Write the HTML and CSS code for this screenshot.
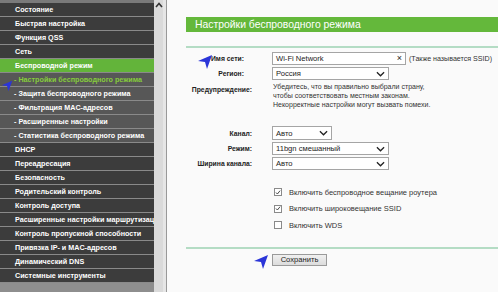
FILE: index.html
```html
<!DOCTYPE html>
<html lang="ru">
<head>
<meta charset="utf-8">
<title>Настройки беспроводного режима</title>
<link rel="stylesheet" href="styles.css">
</head>
<body>
<div class="page">
  <nav class="sidebar">
    <div class="top-band"></div>
    <div class="item">Состояние</div>
    <div class="item">Быстрая настройка</div>
    <div class="item">Функция QSS</div>
    <div class="item">Сеть</div>
    <div class="item item-open">Беспроводной режим</div>
    <div class="item sub sub-active">- Настройки беспроводного режима</div>
    <div class="item sub">- Защита беспроводного режима</div>
    <div class="item sub">- Фильтрация MAC-адресов</div>
    <div class="item sub">- Расширенные настройки</div>
    <div class="item sub">- Статистика беспроводного режима</div>
    <div class="item">DHCP</div>
    <div class="item">Переадресация</div>
    <div class="item">Безопасность</div>
    <div class="item">Родительский контроль</div>
    <div class="item">Контроль доступа</div>
    <div class="item">Расширенные настройки маршрутизации</div>
    <div class="item">Контроль пропускной способности</div>
    <div class="item">Привязка IP- и MAC-адресов</div>
    <div class="item">Динамический DNS</div>
    <div class="item">Системные инструменты</div>
    <div class="bottom-band"></div>
    <svg class="pointer pointer-side" viewBox="0 0 16 16" width="12" height="12"><polygon points="15,1 1,7 8,8 10,15" fill="#2b35d8"/></svg>
  </nav>
  <div class="scrollbar">
    <svg class="scroll-up" viewBox="0 0 10 8" width="10" height="8"><polyline points="2,6 5,2.5 8,6" fill="none" stroke="#333" stroke-width="1.6"/></svg>
  </div>
  <main class="content">
    <div class="title">Настройки беспроводного режима</div>
    <div class="rule"></div>
    <div class="form">
      <div class="row row-ssid">
        <div class="label label-narrow">Имя сети:</div>
        <div class="field input input-ssid"><span>Wi-Fi Network</span><span class="clear">×</span></div>
        <div class="hint">(Также называется SSID)</div>
        <svg class="pointer pointer-ssid" viewBox="0 0 16 16" width="16" height="16"><polygon points="15,1 1,7 8,8 10,15" fill="#2b35d8"/></svg>
      </div>
      <div class="row row-region">
        <div class="label label-narrow">Регион:</div>
        <div class="field select select-wide"><span>Россия</span><svg class="chev" viewBox="0 0 10 6" width="9" height="6"><polyline points="1,1 5,5 9,1" fill="none" stroke="#222" stroke-width="1.4"/></svg></div>
      </div>
      <div class="row row-warn">
        <div class="label">Предупреждение:</div>
        <div class="warn-text">Убедитесь, что вы правильно выбрали страну,<br>чтобы соответствовать местным законам.<br>Некорректные настройки могут вызвать помехи.</div>
      </div>
      <div class="row row-channel">
        <div class="label">Канал:</div>
        <div class="field select select-short"><span>Авто</span><svg class="chev" viewBox="0 0 10 6" width="9" height="6"><polyline points="1,1 5,5 9,1" fill="none" stroke="#222" stroke-width="1.4"/></svg></div>
      </div>
      <div class="row row-mode">
        <div class="label">Режим:</div>
        <div class="field select select-wide"><span>11bgn смешанный</span><svg class="chev" viewBox="0 0 10 6" width="9" height="6"><polyline points="1,1 5,5 9,1" fill="none" stroke="#222" stroke-width="1.4"/></svg></div>
      </div>
      <div class="row row-width">
        <div class="label">Ширина канала:</div>
        <div class="field select select-wide"><span>Авто</span><svg class="chev" viewBox="0 0 10 6" width="9" height="6"><polyline points="1,1 5,5 9,1" fill="none" stroke="#222" stroke-width="1.4"/></svg></div>
      </div>
      <div class="checks">
        <div class="check-row"><span class="box"><svg viewBox="0 0 8 8" width="7" height="7"><polyline points="1.3,4 3.2,6 6.8,1.5" fill="none" stroke="#333" stroke-width="1.2"/></svg></span><span>Включить беспроводное вещание роутера</span></div>
        <div class="check-row"><span class="box"><svg viewBox="0 0 8 8" width="7" height="7"><polyline points="1.3,4 3.2,6 6.8,1.5" fill="none" stroke="#333" stroke-width="1.2"/></svg></span><span>Включить широковещание SSID</span></div>
        <div class="check-row"><span class="box"></span><span>Включить WDS</span></div>
      </div>
    </div>
    <div class="rule rule-bottom"></div>
    <div class="actions">
      <svg class="pointer pointer-save" viewBox="0 0 16 16" width="16" height="16"><polygon points="15,1 1,7 8,8 10,15" fill="#2b35d8"/></svg>
      <button class="save">Сохранить</button>
    </div>
  </main>
</div>
</body>
</html>
```
FILE: styles.css
```css
html, body {
  margin: 0;
  padding: 0;
  width: 498px;
  height: 292px;
  overflow: hidden;
  font-family: "Liberation Sans", Arial, sans-serif;
}

.page {
  display: flex;
  height: 292px;
}

.sidebar {
  position: relative;
  width: 154px;
  flex: none;
  display: flex;
  flex-direction: column;
  background: #8d8d8d;
  overflow: hidden;
}

.top-band {
  height: 3px;
  background: #7a7a7a;
  flex: none;
}

.item {
  flex: none;
  height: 13px;
  line-height: 13px;
  border-bottom: 1px solid #8a8a8a;
  background: #3c3c3c;
  color: #fff;
  font-size: 7.2px;
  font-weight: bold;
  padding-left: 15px;
  white-space: nowrap;
  overflow: hidden;
}

.item-open {
  background: #63b43a;
}

.sub {
  background: #575757;
  padding-left: 14px;
}

.sub-active {
  color: #86cc3c;
}

.bottom-band {
  flex: 1;
  background: #8e8e8e;
}

.pointer {
  position: absolute;
}

.pointer-side {
  left: 1px;
  top: 80px;
}

.scrollbar {
  width: 12px;
  flex: none;
  background: #dadada;
  border-right: 1px solid #999;
  box-shadow: inset -3px 0 0 #e6e6e6;
  position: relative;
}

.scroll-up {
  position: absolute;
  left: 0;
  top: 1px;
}

.content {
  flex: 1;
  background: #fafafa;
  padding-left: 19px;
  padding-top: 17px;
  position: relative;
  min-width: 0;
}

.title {
  height: 15px;
  line-height: 15px;
  background: #64b83b;
  color: #fff;
  font-size: 10.4px;
  padding-left: 9px;
  white-space: nowrap;
}

.rule {
  height: 2px;
  background: #b4dcc4;
  margin-top: 14px;
}

.form {
  display: flex;
  flex-direction: column;
  margin-top: 4px;
}

.row {
  display: flex;
  align-items: center;
  position: relative;
}

.label {
  width: 66px;
  flex: none;
  text-align: right;
  font-size: 6.8px;
  font-weight: bold;
  color: #222;
  margin-right: 20px;
  white-space: nowrap;
}

.label-narrow {
  padding-right: 8px;
  width: 58px;
}

.field {
  box-sizing: border-box;
  height: 13px;
  border: 1px solid #a5a5a5;
  background: #fff;
  font-size: 7.6px;
  color: #222;
  display: flex;
  align-items: center;
  justify-content: space-between;
  padding: 0 3px 0 3px;
}

.input-ssid {
  width: 134px;
}

.clear {
  font-size: 9px;
  line-height: 1;
}

.hint {
  font-size: 7.1px;
  color: #333;
  margin-left: 3px;
  white-space: nowrap;
}

.pointer-ssid {
  left: 11px;
  top: 2px;
}

.row-region {
  margin-top: 2px;
}

.select-wide {
  width: 117px;
}

.select-short {
  width: 60px;
  height: 14px;
}

.chev {
  flex: none;
}

.row-warn {
  margin-top: 2px;
  align-items: flex-start;
}

.row-warn .label {
  margin-top: 4px;
}

.warn-text {
  font-size: 7px;
  line-height: 9px;
  color: #333;
  padding-left: 1px;
}

.row-channel {
  margin-top: 17px;
}

.row-mode,
.row-width {
  margin-top: 2px;
}

.checks {
  display: flex;
  flex-direction: column;
  gap: 8.5px;
  margin-top: 18px;
  padding-left: 88px;
}

.check-row {
  display: flex;
  align-items: center;
  font-size: 7.5px;
  color: #333;
  height: 8px;
}

.box {
  box-sizing: border-box;
  width: 8px;
  height: 8px;
  border: 1px solid #8a8a8a;
  background: #fff;
  margin-right: 7px;
  display: flex;
  align-items: center;
  justify-content: center;
  flex: none;
}

.rule-bottom {
  margin-top: 18px;
}

.actions {
  display: flex;
  align-items: flex-start;
  padding-left: 86px;
  margin-top: 5px;
  position: relative;
}

.pointer-save {
  position: absolute;
  left: 67px;
  top: 0;
}

.save {
  box-sizing: border-box;
  width: 55px;
  height: 12px;
  padding: 0;
  border: 1px solid #9a9a9a;
  background: linear-gradient(#f0f0f0, #dcdcdc);
  font-family: "Liberation Sans", Arial, sans-serif;
  font-size: 7.6px;
  color: #222;
  line-height: 10px;
}
```
